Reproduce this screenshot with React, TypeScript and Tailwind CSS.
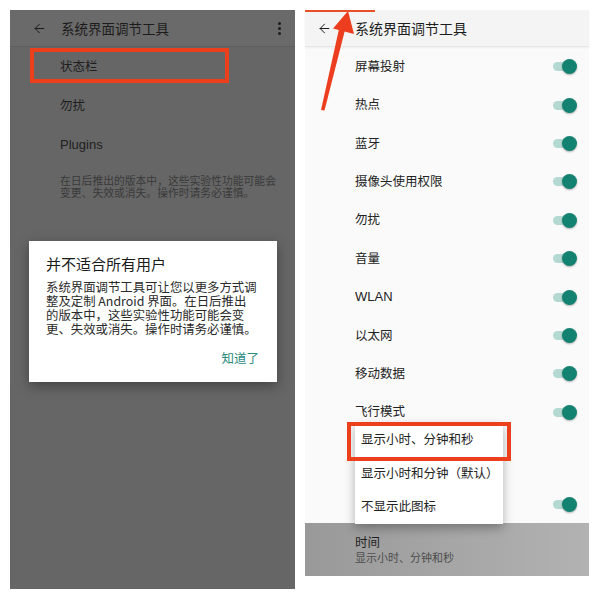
import { ArrowLeft } from "lucide-react";

const font = { fontFamily: '"Noto Sans CJK SC", "Noto Sans", sans-serif' };

const items = ["屏幕投射", "热点", "蓝牙", "摄像头使用权限", "勿扰", "音量", "WLAN", "以太网", "移动数据", "飞行模式"];

function Toggle() {
  return (
    <div className="relative h-[14px] w-[24px]">
      <div className="absolute left-0 top-[3px] h-[9px] w-[22px] rounded-full bg-[#b3d9d2]" />
      <div className="absolute right-0 top-0 h-[15px] w-[15px] rounded-full bg-[#138271] shadow-[0_1px_2px_rgba(0,0,0,0.3)]" />
    </div>
  );
}

function LeftScreen() {
  return (
    <div className="relative h-[579px] w-[285px] bg-[#666666]">
      <div className="flex h-[37px] items-center border-b border-[#5f5f5f] bg-[#6a6a6a] pl-[22px] pr-[14px]">
        <ArrowLeft className="h-[15px] w-[15px] text-[#1c1c1c]" strokeWidth={1.6} />
        <span className="ml-[14px] flex-1 text-[13.5px] text-[#1c1c1c]">系统界面调节工具</span>
        <div className="flex flex-col gap-[2px]">
          <span className="h-[3px] w-[3px] rounded-full bg-[#1c1c1c]" />
          <span className="h-[3px] w-[3px] rounded-full bg-[#1c1c1c]" />
          <span className="h-[3px] w-[3px] rounded-full bg-[#1c1c1c]" />
        </div>
      </div>
      <div className="flex flex-col pl-[50px] text-[12.5px] text-[#1e1e1e]">
        <div className="flex h-[39px] items-center">状态栏</div>
        <div className="flex h-[39px] items-center">勿扰</div>
        <div className="flex h-[39px] items-center" style={{ fontFamily: '"Liberation Sans", sans-serif', fontSize: 13 }}>Plugins</div>
        <div className="pt-[10px] text-[10.8px] leading-[12px] text-[#3a3a3a]">
          <div>在日后推出的版本中，这些实验性功能可能会</div>
          <div>变更、失效或消失。操作时请务必谨慎。</div>
        </div>
      </div>

      <div className="absolute left-[20px] top-[38px] h-[35px] w-[199px] border-4 border-[#ec3f1c]" />

      <div className="absolute left-[19px] top-[231px] h-[141px] w-[248px] bg-white px-[17px] pt-[13px] shadow-[0_4px_12px_rgba(0,0,0,0.35)]">
        <div className="text-[15px] leading-[20px] text-[#1a1a1a]">并不适合所有用户</div>
        <div className="mt-[6px] text-[12.4px] leading-[14px] text-[#2a2a2a]">
          <div>系统界面调节工具可让您以更多方式调</div>
          <div>整及定制 Android 界面。在日后推出</div>
          <div>的版本中，这些实验性功能可能会变</div>
          <div>更、失效或消失。操作时请务必谨慎。</div>
        </div>
        <div className="mt-[13px] flex justify-end pr-[1px] text-[12.5px] text-[#2a8a7c]">知道了</div>
      </div>
    </div>
  );
}

function RightScreen() {
  return (
    <div className="relative h-[580px] w-[284px] bg-[#fafafa]">
      <div className="absolute left-0 top-0 h-[2px] w-[70px] bg-[#e8502a]" />
      <div className="flex h-[37px] items-center border-b border-[#e6e6e6] bg-[#f4f4f4] pl-[12px] shadow-[0_1px_2px_rgba(0,0,0,0.05)]">
        <ArrowLeft className="h-[15px] w-[15px] text-[#1c1c1c]" strokeWidth={1.6} />
        <span className="ml-[23px] text-[14px] text-[#1c1c1c]">系统界面调节工具</span>
      </div>
      <div className="flex flex-col">
        {items.map((it) => (
          <div key={it} className="flex h-[38.4px] items-center justify-between pl-[50px] pr-[12px]">
            <span className="text-[12.5px] text-[#222]" style={it === "WLAN" ? { fontFamily: '"Liberation Sans", sans-serif', fontSize: 13 } : undefined}>
              {it}
            </span>
            <Toggle />
          </div>
        ))}
        <div className="h-[54px]" />
        <div className="flex h-[38px] items-center justify-end pr-[12px]">
          <Toggle />
        </div>
        <div className="flex h-[53px] flex-col justify-center bg-gradient-to-r from-[#999999] to-[#b2b2b2] pl-[50px]">
          <span className="text-[12.5px] leading-[16px] text-[#1e1e1e]">时间</span>
          <span className="text-[11px] leading-[14px] text-[#4d4d4d]">显示小时、分钟和秒</span>
        </div>
        <div className="h-[14px] bg-white" />
      </div>

      <div className="absolute left-[50px] top-[413px] flex w-[148px] flex-col bg-white shadow-[0_4px_10px_rgba(0,0,0,0.3)]">
        {["显示小时、分钟和秒", "显示小时和分钟（默认）", "不显示此图标"].map((t) => (
          <div key={t} className="flex h-[33.5px] items-center pl-[6px] text-[12.5px] text-[#222]">
            {t}
          </div>
        ))}
      </div>
      <div className="absolute left-[42px] top-[412px] h-[39px] w-[164px] border-4 border-[#ec3f1c]" />

      <svg className="absolute left-0 top-0" width="80" height="120" viewBox="305 10 80 120">
        <polygon points="321,110 324.5,110.5 345,30 339,29" fill="#ec3d1f" />
        <polygon points="348,11 354,34 333,28.5" fill="#ec3d1f" />
      </svg>
    </div>
  );
}

export default function App() {
  return (
    <div className="flex h-[600px] w-[600px] gap-[10px] bg-white pl-[10px] pt-[10px]" style={font}>
      <LeftScreen />
      <RightScreen />
    </div>
  );
}
